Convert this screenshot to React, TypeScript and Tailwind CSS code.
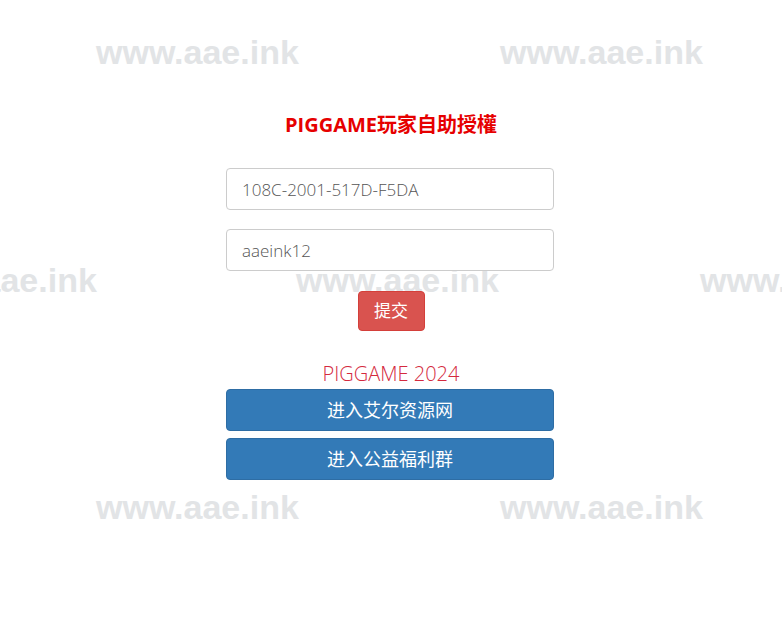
import React from 'react';

const marks = [
  { left: 96, top: 32 },
  { left: 500, top: 32 },
  { left: -106, top: 260 },
  { left: 296, top: 260 },
  { left: 700, top: 260 },
  { left: 96, top: 487 },
  { left: 500, top: 487 },
];

export default function App() {
  return (
    <div
      className="relative w-[782px] h-[624px] overflow-hidden bg-white"
      style={{ fontFamily: '"Open Sans", "Noto Sans CJK SC", sans-serif' }}
    >
      {/* watermark layer */}
      <div className="absolute inset-0 pointer-events-none">
        {marks.map((m, i) => (
          <div
            key={i}
            className="absolute text-[34px] leading-[40px] font-bold text-[#e2e4e6] whitespace-nowrap"
            style={{ left: m.left, top: m.top, fontFamily: '"Liberation Sans", Arial, sans-serif' }}
          >
            www.aae.ink
          </div>
        ))}
      </div>

      <div className="relative flex flex-col items-center pt-[111px]">
        <h1 className="text-[20px] leading-[28px] font-bold text-[#e60000]">PIGGAME玩家自助授權</h1>

        <div className="w-[328px] mr-[2px] mt-[29px] flex flex-col gap-[19px]">
          <input
            defaultValue="108C-2001-517D-F5DA"
            className="h-[42px] w-full rounded-[4px] border border-[#cccccc] bg-white px-[15px] text-[17px] font-light text-[#555555] outline-none"
          />
          <input
            defaultValue="aaeink12"
            className="h-[42px] w-full rounded-[4px] border border-[#cccccc] bg-white px-[15px] text-[17px] font-light text-[#555555] outline-none"
          />
        </div>

        <button className="mt-[20px] h-[40px] w-[67px] rounded-[4px] border border-[#d43f3a] bg-[#d9534f] text-[17px] text-white">
          提交
        </button>

        <div className="mt-[30px] text-[20px] leading-[26px] font-light text-[#d42a3e]">PIGGAME 2024</div>

        <div className="w-[328px] mr-[2px] mt-[2px] flex flex-col gap-[7px]">
          <button className="h-[42px] w-full rounded-[4px] border border-[#2e6da4] bg-[#337ab7] text-[18px] text-white">
            进入艾尔资源网
          </button>
          <button className="h-[42px] w-full rounded-[4px] border border-[#2e6da4] bg-[#337ab7] text-[18px] text-white">
            进入公益福利群
          </button>
        </div>
      </div>
    </div>
  );
}
